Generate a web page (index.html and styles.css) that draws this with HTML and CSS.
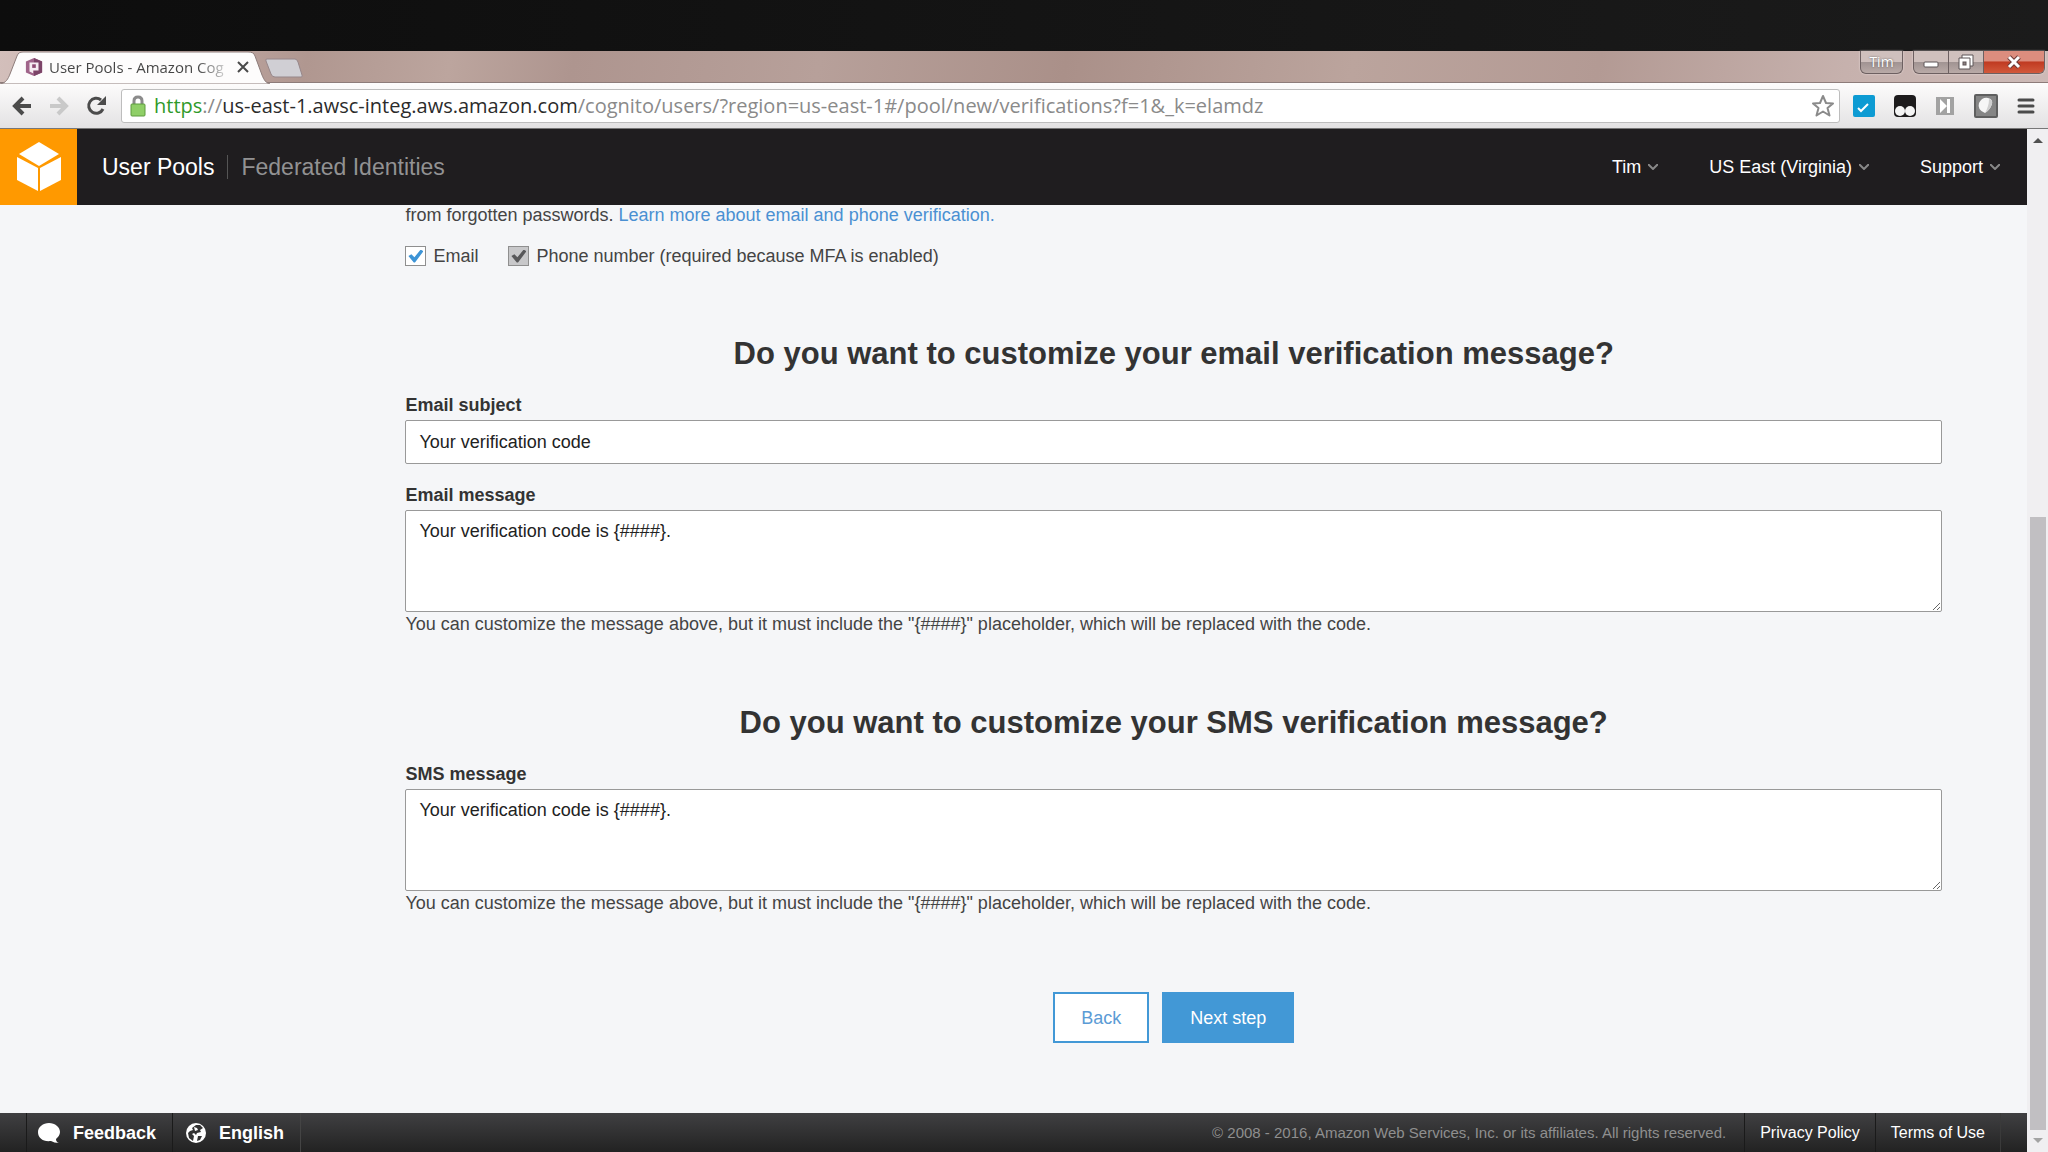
FILE: index.html
```
<!DOCTYPE html>
<html lang="en">
<head>
  <meta charset="utf-8">
  <title>User Pools - Amazon Cognito</title>
  <link rel="stylesheet" href="styles.css">
</head>
<body>
  <!-- Tab strip and window buttons -->
  <div class="titlebar">
    <div class="tab">
      <svg class="tab-shape" viewBox="0 0 270 33" preserveAspectRatio="none" aria-hidden="true">
        <path d="M0 33 C6 32 8 28 10 23 L17 5 C18 2 20 1 23 1 H248 C252 1 254 2 255 5 L262 24 C264 29 266 32 270 33 Z" fill="#fdfcfc" stroke="#8d7c7a" stroke-width="1"/>
      </svg>
      <svg class="favicon" viewBox="0 0 20 20" aria-hidden="true">
        <path d="M10 0 L19 4 V16 L10 20 L1 16 V4 Z" fill="#a0648a"/>
        <path d="M10 0 L19 4 V16 L10 20 Z" fill="#7c4468"/>
        <path d="M5 5 H15 V14 H9 V17 L5 15 Z" fill="#f6edf2"/>
        <rect x="8" y="7" width="4" height="4" fill="#8d4b73"/>
      </svg>
      <span class="tab-title">User Pools - Amazon Cog</span>
      <button class="tab-close" aria-label="Close tab">
        <svg width="12" height="12" viewBox="0 0 12 12"><path d="M1 1 L11 11 M11 1 L1 11" stroke="#4a4a4a" stroke-width="2"/></svg>
      </button>
    </div>
    <button class="new-tab" aria-label="New tab">
      <svg width="40" height="20" viewBox="0 0 40 20"><path d="M3 1 H31 Q33 1 34 4 L38 17 Q39 19 37 19 H11 Q8 19 7 16 L2 3 Q1 1 3 1 Z" fill="#d0cfd4" stroke="#97878a"/></svg>
    </button>
    <div class="window-buttons">
      <button class="profile">Tim</button>
      <div class="window-group">
        <button class="win-btn" aria-label="Minimize">
          <svg width="18" height="16" viewBox="0 0 18 16"><rect x="2" y="8" width="14" height="5" rx="1" fill="#fff" stroke="#5d5556"/></svg>
        </button>
        <button class="win-btn" aria-label="Restore">
          <svg width="18" height="16" viewBox="0 0 18 16"><path d="M5 1 H16 V12 H5 Z" fill="#fff" stroke="#5d5556"/><path d="M2 4 H13 V15 H2 Z" fill="#fff" stroke="#5d5556"/><rect x="6" y="8" width="3" height="3" fill="#8e8082" stroke="#5d5556"/></svg>
        </button>
        <button class="win-btn win-close" aria-label="Close">
          <svg width="18" height="16" viewBox="0 0 18 16"><path d="M4 3 L14 13 M14 3 L4 13" stroke="#6b3a38" stroke-width="5"/><path d="M4 3 L14 13 M14 3 L4 13" stroke="#fff" stroke-width="3"/></svg>
        </button>
      </div>
    </div>
  </div>

  <!-- Address bar -->
  <div class="toolbar">
    <button class="nav-btn" aria-label="Back">
      <svg width="20" height="20" viewBox="0 0 20 20"><path d="M19 10 H3 M11 2 L3 10 L11 18" fill="none" stroke="#4b4b4b" stroke-width="4"/></svg>
    </button>
    <button class="nav-btn" aria-label="Forward">
      <svg width="20" height="20" viewBox="0 0 20 20"><path d="M1 10 H17 M9 2 L17 10 L9 18" fill="none" stroke="#c9c9c9" stroke-width="4"/></svg>
    </button>
    <button class="nav-btn" aria-label="Reload">
      <svg width="20" height="20" viewBox="0 0 20 20"><path d="M15 4 A7.500 7.500 0 1 0 17 13" fill="none" stroke="#4b4b4b" stroke-width="3"/><path d="M20 0 V9 H11 Z" fill="#4b4b4b"/></svg>
    </button>
    <div class="address">
      <svg width="16" height="22" viewBox="0 0 16 22" aria-hidden="true">
        <path d="M4 10 V6 Q4 2 8 2 Q12 2 12 6 V10" fill="none" stroke="#8b8b8b" stroke-width="3"/>
        <rect x="1" y="9" width="14" height="12" rx="1" fill="#8fcf67" stroke="#5d9b3e"/>
      </svg>
      <span class="url"><span class="secure">https</span>://<span class="host">us-east-1.awsc-integ.aws.amazon.com</span>/cognito/users/?region=us-east-1#/pool/new/verifications?f=1&amp;_k=elamdz</span>
      <button class="nav-btn" aria-label="Bookmark this page">
        <svg width="24" height="24" viewBox="0 0 24 24"><path d="M12 2 L15 9 L22 9.500 L16.500 14 L18.500 21.500 L12 17.500 L5.500 21.500 L7.500 14 L2 9.500 L9 9 Z" fill="#fff" stroke="#8a8a8a" stroke-width="2" stroke-linejoin="round"/></svg>
      </button>
    </div>
    <div class="extensions">
      <button class="nav-btn" aria-label="Tasks">
        <svg width="22" height="22" viewBox="0 0 22 22"><rect width="22" height="22" rx="2" fill="#0d9bd3"/><path d="M5 13 L8 16 L15 9" fill="none" stroke="#fff" stroke-width="2"/></svg>
      </button>
      <button class="nav-btn" aria-label="Scripts">
        <svg width="22" height="22" viewBox="0 0 22 22"><rect width="22" height="22" rx="4" fill="#1d1b1c"/><circle cx="6" cy="16" r="5" fill="#f4f4f4"/><circle cx="16" cy="16" r="5" fill="#f4f4f4"/></svg>
      </button>
      <button class="nav-btn" aria-label="Skip">
        <svg width="20" height="20" viewBox="0 0 20 20"><rect x="1" y="1" width="18" height="18" fill="#a2a2a2"/><path d="M5 3 L12 10 L5 17 Z M12 3 H15 V17 H12 Z" fill="#fff"/></svg>
      </button>
      <button class="nav-btn" aria-label="Shield">
        <svg width="24" height="24" viewBox="0 0 24 24"><rect width="24" height="24" rx="2" fill="#5f5f5f"/><rect x="2" y="2" width="20" height="20" fill="#858585"/><path d="M5 9 Q8 3 14 4 Q19 5 18 10 Q16 16 11 19 Q3 16 5 9 Z" fill="#f6f6f6"/><path d="M15 5 Q19 6 18 10 Q16 16 11 19 Q15 12 15 5 Z" fill="#cfcfcf"/></svg>
      </button>
      <button class="nav-btn" aria-label="Menu">
        <svg width="18" height="18" viewBox="0 0 18 18"><path d="M2 3 H16 M2 9 H16 M2 15 H16" stroke="#4b4b4b" stroke-width="3" stroke-linecap="round"/></svg>
      </button>
    </div>
  </div>

  <div class="viewport">
    <div class="page">
      <!-- Console header -->
      <header class="header">
        <a class="logo" href="#" aria-label="AWS console">
          <svg width="46" height="50" viewBox="0 0 46 50">
            <path d="M23 0 L43 12 L23 24 L3 12 Z" fill="#fff"/>
            <path d="M1 15 L22 26 V49 L1 38 Z" fill="#fff"/>
            <path d="M45 15 L24 26 V49 L45 38 Z" fill="#fff"/>
          </svg>
        </a>
        <nav class="sections">
          <a class="active" href="#">User Pools</a>
          <a href="#">Federated Identities</a>
        </nav>
        <nav class="menus">
          <button>Tim <svg width="10" height="6" viewBox="0 0 10 6"><path d="M0 0 L5 5 L10 0"/></svg></button>
          <button>US East (Virginia) <svg width="10" height="6" viewBox="0 0 10 6"><path d="M0 0 L5 5 L10 0"/></svg></button>
          <button>Support <svg width="10" height="6" viewBox="0 0 10 6"><path d="M0 0 L5 5 L10 0"/></svg></button>
        </nav>
      </header>

      <!-- Verification settings -->
      <main class="content">
        <p class="intro">from forgotten passwords. <a href="#">Learn more about email and phone verification.</a></p>
        <div class="checks">
          <label><input type="checkbox" checked> Email</label>
          <label><input type="checkbox" checked disabled> Phone number (required because MFA is enabled)</label>
        </div>

        <section>
          <h2>Do you want to customize your email verification message?</h2>
          <label class="field-label" for="subject">Email subject</label>
          <input class="field" type="text" id="subject" value="Your verification code">
          <label class="field-label" for="email-message">Email message</label>
          <textarea class="field" id="email-message">Your verification code is {####}.</textarea>
          <p class="hint">You can customize the message above, but it must include the "{####}" placeholder, which will be replaced with the code.</p>
        </section>

        <section>
          <h2>Do you want to customize your SMS verification message?</h2>
          <label class="field-label" for="sms-message">SMS message</label>
          <textarea class="field" id="sms-message">Your verification code is {####}.</textarea>
          <p class="hint">You can customize the message above, but it must include the "{####}" placeholder, which will be replaced with the code.</p>
        </section>

        <div class="actions">
          <button class="btn">Back</button>
          <button class="btn primary">Next step</button>
        </div>
      </main>

      <footer class="footer">
        <button class="feedback">
          <svg width="24" height="22" viewBox="0 0 24 22"><path d="M12 1 C18 1 23 5 23 10 C23 13 21 15 19 17 Q19 20 22 21 Q17 21 14 19 C6 20 1 16 1 10 C1 5 6 1 12 1 Z" fill="#fff"/></svg>
          Feedback
        </button>
        <button class="language">
          <svg width="22" height="22" viewBox="0 0 22 22"><circle cx="11" cy="11" r="10" fill="#fff"/><path d="M11 3 L15 3 L18 6 L15 8 L16 10 L12 11 L11 13 L9 11 L7 12 L9 14 L8 19 L4 16 L3 11 L5 9 L8 8 L7 6 Z" fill="#333"/><path d="M9 5 L12 6 L13 8 L10 9 Z" fill="#fff"/><path d="M13 14 L17 14 L15 18 L12 19 Z" fill="#333"/></svg>
          English
        </button>
        <span class="copyright">© 2008 - 2016, Amazon Web Services, Inc. or its affiliates. All rights reserved.</span>
        <a href="#">Privacy Policy</a>
        <a href="#">Terms of Use</a>
      </footer>
    </div>

    <!-- Page scrollbar -->
    <div class="scrollbar" aria-hidden="true">
      <svg width="10" height="5" viewBox="0 0 10 5"><path d="M0 5 L5 0 L10 5 Z" fill="#505050"/></svg>
      <div class="track"><div class="thumb"></div></div>
      <svg width="10" height="5" viewBox="0 0 10 5"><path d="M0 0 L5 5 L10 0 Z" fill="#a3a3a3"/></svg>
    </div>
  </div>
</body>
</html>
```
FILE: styles.css
```
* {
  box-sizing: border-box;
}

body {
  margin: 0;
  padding-top: 51px;
  height: 100vh;
  display: flex;
  flex-direction: column;
  overflow: hidden;
  background: linear-gradient(to right, #0d0d0d, #1b1b1b);
  font-family: "Liberation Sans", Arial, sans-serif;
  font-size: 18px;
  line-height: 20px;
  color: #444;
}

button {
  border: none;
  padding: 0;
  background: none;
  font: inherit;
  color: inherit;
  cursor: pointer;
}

a {
  text-decoration: none;
}

svg {
  display: block;
  flex: none;
}

/* Tab strip */
.titlebar {
  display: flex;
  align-items: flex-start;
  height: 32px;
  padding-right: 3px;
  background: linear-gradient(100deg, #d3bfbb 0, #c3aca8 8%, #b09790 15%, #bca59e 22%, #ae958f 28%, #b7a09a 40%, #aa9089 52%, #bba49d 66%, #b39a94 78%, #c6b1ad 90%, #cdbab7 100%);
  border-bottom: 1px solid #8d7c7a;
  flex: none;
}

.tab {
  position: relative;
  display: flex;
  align-items: center;
  width: 270px;
  height: 32px;
  padding: 0 21px 0 25px;
  gap: 6px;
  flex: none;
}

.tab-shape {
  position: absolute;
  left: 0;
  top: 0;
  width: 100%;
  height: 33px;
}

.favicon {
  position: relative;
  width: 18px;
  height: 20px;
}

.tab-title {
  position: relative;
  flex: 1;
  overflow: hidden;
  white-space: nowrap;
  font-family: "Open Sans", "Noto Sans", sans-serif;
  font-size: 15px;
  background: linear-gradient(to right, #444 85%, #ccc 100%);
  background-clip: text;
  color: transparent;
}

.tab-close {
  position: relative;
  margin-left: 7px;
}

.new-tab {
  margin: 7px 0 0 -6px;
}

.window-buttons {
  display: flex;
  gap: 10px;
  margin-left: auto;
}

.profile,
.window-group {
  height: 23px;
  border: 1px solid #6d6061;
  border-top: none;
  border-radius: 0 0 6px 6px;
  background: linear-gradient(#cfc0bd 50%, #a09392 50%, #b9aaa7);
  box-shadow: 0 0 2px #efe4e2;
  overflow: hidden;
}

.profile {
  width: 43px;
  font-family: "Open Sans", "Noto Sans", sans-serif;
  font-size: 14px;
  color: #fff;
  text-shadow: 0 0 2px #555;
}

.window-group {
  display: flex;
}

.win-btn {
  display: flex;
  align-items: center;
  justify-content: center;
  width: 35px;
  border-right: 1px solid #6d6061;
}

.win-close {
  width: 60px;
  border-right: none;
  background: linear-gradient(#dc8d7e 45%, #c03a21 50%, #d2593c);
}

/* Address bar */
.toolbar {
  display: flex;
  align-items: center;
  height: 46px;
  padding: 0 13px 0 12px;
  gap: 17px;
  background: linear-gradient(#fdfcfc, #e3e2e3);
  border-bottom: 1px solid #777;
  flex: none;
}

.nav-btn {
  display: flex;
}

.address {
  flex: 1;
  display: flex;
  align-items: center;
  height: 34px;
  margin-left: -2px;
  padding: 0 4px 0 8px;
  gap: 8px;
  background: #fff;
  border: 1px solid #bdbdbd;
  border-radius: 3px;
}

.url {
  flex: 1;
  white-space: nowrap;
  font-family: "Open Sans", "Noto Sans", sans-serif;
  font-size: 20px;
  color: #8a8a8a;
}

.secure {
  color: #2f9a2a;
}

.host {
  color: #2b2b2b;
}

.extensions {
  display: flex;
  align-items: center;
  gap: 19px;
  margin-left: -4px;
}

/* Page area */
.viewport {
  flex: 1;
  display: flex;
  min-height: 0;
  background: #f5f6f8;
}

.page {
  flex: 1;
  display: flex;
  flex-direction: column;
  min-width: 0;
}

/* Console header */
.header {
  display: flex;
  align-items: center;
  height: 76px;
  padding-right: 27px;
  background: #1f1d1f;
  flex: none;
}

.logo {
  display: flex;
  align-items: center;
  justify-content: center;
  width: 77px;
  height: 76px;
  background: #ff9900;
}

.sections {
  display: flex;
  margin-left: 25px;
  font-size: 23px;
  line-height: 24px;
}

.sections a {
  color: #929293;
}

.sections .active {
  padding-right: 13px;
  margin-right: 13px;
  border-right: 1px solid #555;
  color: #fff;
}

.menus {
  display: flex;
  gap: 51px;
  margin-left: auto;
  color: #fff;
}

.menus button {
  display: flex;
  align-items: center;
  gap: 7px;
}

.menus path {
  fill: none;
  stroke: #888;
  stroke-width: 2;
}

/* Form */
.content {
  flex: 1;
  min-height: 0;
  padding: 0 85px 0 20%;
}

.content a {
  color: #4a90d2;
}

.intro {
  margin: 0;
}

.checks {
  display: flex;
  gap: 30px;
  margin-top: 21px;
}

.checks label {
  display: flex;
  align-items: center;
  gap: 7px;
}

.checks input {
  appearance: none;
  width: 21px;
  height: 20px;
  margin: 0;
  border: 1px solid #8f8f8f;
  background: #fff;
  color: #3d94d6;
  display: flex;
  align-items: center;
  justify-content: center;
}

.checks input::before {
  content: "";
  width: 15px;
  height: 13px;
  background: currentColor;
  clip-path: polygon(0 50%, 20% 36%, 40% 60%, 82% 0, 100% 14%, 44% 100%, 36% 100%);
}

.checks input:disabled {
  background: #c8c8ca;
  color: #58585a;
}

section {
  padding-top: 68px;
}

section + section {
  padding-top: 69px;
}

h2 {
  margin: 0 0 21px;
  text-align: center;
  font-size: 31px;
  line-height: 40px;
  color: #333;
}

.field-label {
  display: block;
  margin-bottom: 5px;
  font-weight: bold;
  color: #333;
}

.field {
  display: block;
  width: 100%;
  height: 44px;
  margin: 0 0 21px;
  padding: 10px 13px;
  border: 1px solid #999;
  border-radius: 2px;
  background: #fff;
  font: inherit;
  color: #222;
}

textarea.field {
  height: 102px;
  margin-bottom: 2px;
}

.hint {
  margin: 0;
}

.actions {
  display: flex;
  justify-content: center;
  gap: 13px;
  margin-top: 79px;
}

.btn {
  height: 51px;
  padding: 0 26px;
  border: 2px solid #4298d6;
  background: #fff;
  color: #5b9bd5;
}

.btn.primary {
  background: #4298d6;
  color: #fff;
}

/* Footer */
.footer {
  display: flex;
  align-items: center;
  height: 39px;
  padding: 0 26px;
  background: linear-gradient(#404042, #222);
  color: #fff;
  font-size: 16px;
  flex: none;
}

.footer button {
  display: flex;
  align-items: center;
  gap: 12px;
  height: 39px;
  padding: 0 16px 0 10px;
  border-left: 1px solid #1a1a1a;
  font-size: 18px;
  font-weight: bold;
}

.footer .language {
  padding-left: 12px;
  border-right: 1px solid #444;
}

.copyright {
  margin-left: auto;
  padding-right: 18px;
  font-size: 15px;
  color: #8f8f8f;
}

.footer a {
  padding: 0 15px;
  border-left: 1px solid #1a1a1a;
  line-height: 39px;
  color: #fff;
}

.footer a:last-child {
  border-right: 1px solid #3a3a3a;
}

/* Scrollbar */
.scrollbar {
  display: flex;
  flex-direction: column;
  align-items: center;
  gap: 8px;
  width: 21px;
  padding: 9px 0;
  background: #f0eff1;
}

.track {
  flex: 1;
  display: flex;
  flex-direction: column;
  justify-content: flex-end;
}

.thumb {
  width: 16px;
  height: 62.6%;
  background: #c1bfc2;
}
```
